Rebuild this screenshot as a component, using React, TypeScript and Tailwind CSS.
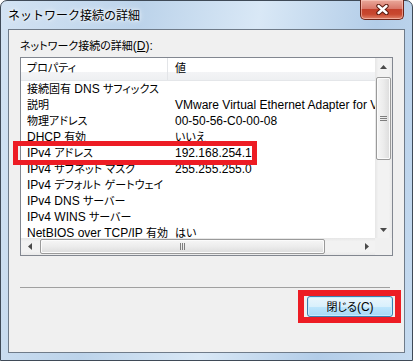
import React from 'react';

const rows: [string, string][] = [
  ["接続固有 DNS サフィックス", ""],
  ["説明", "VMware Virtual Ethernet Adapter for VMnet1"],
  ["物理アドレス", "00-50-56-C0-00-08"],
  ["DHCP 有効", "いいえ"],
  ["IPv4 アドレス", "192.168.254.1"],
  ["IPv4 サブネット マスク", "255.255.255.0"],
  ["IPv4 デフォルト ゲートウェイ", ""],
  ["IPv4 DNS サーバー", ""],
  ["IPv4 WINS サーバー", ""],
  ["NetBIOS over TCP/IP 有効", "はい"],
];

// Japanese runs a touch smaller so they sit like MS UI Gothic
const J = ({ t }: { t: string }) => {
  const parts = t.split(/([\u3000-\u9fff\uff00-\uffef]+)/);
  return (
    <>
      {parts.map((p, i) =>
        i % 2 ? (
          <span key={i} className="text-[11px]">{p}</span>
        ) : (
          <React.Fragment key={i}>{p}</React.Fragment>
        )
      )}
    </>
  );
};

// small scroll arrow
const Arrow = ({ dir }: { dir: 'up' | 'down' | 'left' | 'right' }) => {
  const pts = {
    up: "0,4 3.5,0 7,4",
    down: "0,0 7,0 3.5,4",
    left: "4,0 4,7 0,3.5",
    right: "0,0 0,7 4,3.5",
  }[dir];
  const vertical = dir === 'up' || dir === 'down';
  return (
    <svg width={vertical ? 7 : 4} height={vertical ? 4 : 7} viewBox={vertical ? "0 0 7 4" : "0 0 4 7"}>
      <polygon points={pts} fill="#4a4a4a" />
    </svg>
  );
};

const App = () => {
  return (
    <div className="relative w-[413px] h-[361px] overflow-hidden bg-white">
      <div className="flex h-full w-full flex-col rounded-t-[7px] border border-[#3f4a57] bg-[linear-gradient(100deg,#d3e3f3_0%,#bcd3ea_30%,#d9e8f6_55%,#b3cde8_80%,#c6dbf0_100%)] px-[7px] pb-[7px] font-['Noto_Sans_CJK_JP',sans-serif]">
        {/* title bar */}
        <div className="flex h-[28px] shrink-0 items-start justify-between">
          <div className="pt-[5px] text-[12px] leading-[18px] text-black [text-shadow:0_0_6px_#ffffff,0_0_3px_#ffffff]">
            ネットワーク接続の詳細
          </div>
          <div className="-mt-[1px] mr-[1px] flex h-[20px] w-[44px] items-center justify-center rounded-b-[5px] border border-t-0 border-[#6e2418] bg-[linear-gradient(to_bottom,#eaa99b_0%,#d9786a_45%,#c4412c_50%,#c8482f_75%,#e0826a_100%)] shadow-[inset_0_0_0_1px_rgba(255,210,200,0.55)]">
            <svg width="13" height="11" viewBox="0 0 13 11">
              <path d="M2.5 2 L10.5 9 M10.5 2 L2.5 9" stroke="#5a1b10" strokeWidth="4.4" strokeLinecap="round" />
              <path d="M2.5 2 L10.5 9 M10.5 2 L2.5 9" stroke="#ffffff" strokeWidth="2.4" strokeLinecap="round" />
            </svg>
          </div>
        </div>

        {/* client area */}
        <div className="flex min-h-0 flex-1 flex-col border border-[#6f7b89] bg-[#f0f0f0] px-[11px] pt-[9px] text-[12px] text-black font-['Liberation_Sans','Noto_Sans_CJK_JP',sans-serif] [font-feature-settings:'palt']">
          <div className="h-[14px] leading-[14px]">
            <J t="ネットワーク接続の詳細" />(<span className="underline">D</span>):
          </div>

          {/* list view */}
          <div className="mt-[4px] flex h-[199px] shrink-0 flex-col border border-[#828790] bg-white">
            <div className="flex min-h-0 flex-1">
              <div className="flex min-w-0 flex-1 flex-col overflow-hidden">
                <div className="flex h-[23px] shrink-0 items-center bg-[linear-gradient(to_bottom,#ffffff_0%,#ffffff_62%,#f3f4f6_63%,#eef0f2_100%)] border-b border-[#e4e6e9]">
                  <div className="flex h-full w-[147px] shrink-0 items-center border-r border-[#e3e5e8] pl-[6px] pb-[2px]"><J t="プロパティ" /></div>
                  <div className="flex h-full items-center pl-[7px] pb-[2px]"><J t="値" /></div>
                </div>
                {rows.map(([k, v]) => (
                  <div key={k} className="flex h-[16px] shrink-0 items-center leading-[16px]">
                    <div className="w-[147px] shrink-0 overflow-hidden text-clip whitespace-nowrap pl-[6px] pr-[10px]"><J t={k} /></div>
                    <div className="whitespace-nowrap pl-[7px]"><J t={v} /></div>
                  </div>
                ))}
              </div>

              {/* vertical scrollbar */}
              <div className="flex w-[17px] shrink-0 flex-col bg-[linear-gradient(to_right,#e6e6e6_0%,#f2f2f2_20%,#f2f2f2_80%,#e9e9e9_100%)]">
                <div className="flex h-[17px] shrink-0 items-center justify-center">
                  <Arrow dir="up" />
                </div>
                <div className="mx-[1px] mt-[2px] flex h-[83px] shrink-0 flex-col items-center justify-center gap-[1px] rounded-[2px] border border-[#9a9a9a] bg-[linear-gradient(to_right,#f6f6f6_0%,#ececec_50%,#dcdcdc_100%)] shadow-[inset_0_0_0_1px_#fbfbfb]">
                  <div className="h-[1px] w-[7px] bg-[#7e7e7e]" />
                  <div className="h-[1px] w-[7px] bg-[#7e7e7e]" />
                  <div className="h-[1px] w-[7px] bg-[#7e7e7e]" />
                </div>
                <div className="flex-1" />
                <div className="flex h-[17px] shrink-0 items-center justify-center">
                  <Arrow dir="down" />
                </div>
              </div>
            </div>

            {/* horizontal scrollbar */}
            <div className="flex h-[17px] shrink-0">
              <div className="flex min-w-0 flex-1 bg-[linear-gradient(to_bottom,#e6e6e6_0%,#f2f2f2_20%,#f2f2f2_80%,#e9e9e9_100%)]">
                <div className="flex w-[17px] shrink-0 items-center justify-center">
                  <Arrow dir="left" />
                </div>
                <div className="my-[1px] ml-[2px] flex w-[285px] shrink-0 items-center justify-center gap-[1px] rounded-[2px] border border-[#9a9a9a] bg-[linear-gradient(to_bottom,#f6f6f6_0%,#ececec_50%,#dcdcdc_100%)] shadow-[inset_0_0_0_1px_#fbfbfb]">
                  <div className="h-[7px] w-[1px] bg-[#7e7e7e]" />
                  <div className="h-[7px] w-[1px] bg-[#7e7e7e]" />
                  <div className="h-[7px] w-[1px] bg-[#7e7e7e]" />
                </div>
                <div className="flex-1" />
                <div className="flex w-[17px] shrink-0 items-center justify-center">
                  <Arrow dir="right" />
                </div>
              </div>
              <div className="w-[17px] shrink-0 bg-[#f0f0f0]" />
            </div>
          </div>

          <div className="mt-[31px] mr-[3px] h-[1px] shrink-0 bg-[#a0a0a0]" />

          <div className="mt-[8px] flex justify-end">
            <button className="flex h-[21px] w-[86px] items-center justify-center rounded-[3px] border border-[#3c7fb1] bg-[linear-gradient(to_bottom,#eaf6fd_0%,#d9f0fc_50%,#bee6fd_51%,#a7d9f5_100%)] shadow-[inset_0_0_0_1px_#c4ecff] text-[12px] leading-[14px] text-black">
              <J t="閉じる" />(C)
            </button>
          </div>
        </div>
      </div>

      {/* red highlight marks */}
      <div className="pointer-events-none absolute left-[13px] top-[141px] h-[24px] w-[244px] border-[5px] border-[#ed1c24]" />
      <div className="pointer-events-none absolute left-[298px] top-[290px] h-[33px] w-[103px] border-[6px] border-[#ed1c24]" />
    </div>
  );
};

export default App;
